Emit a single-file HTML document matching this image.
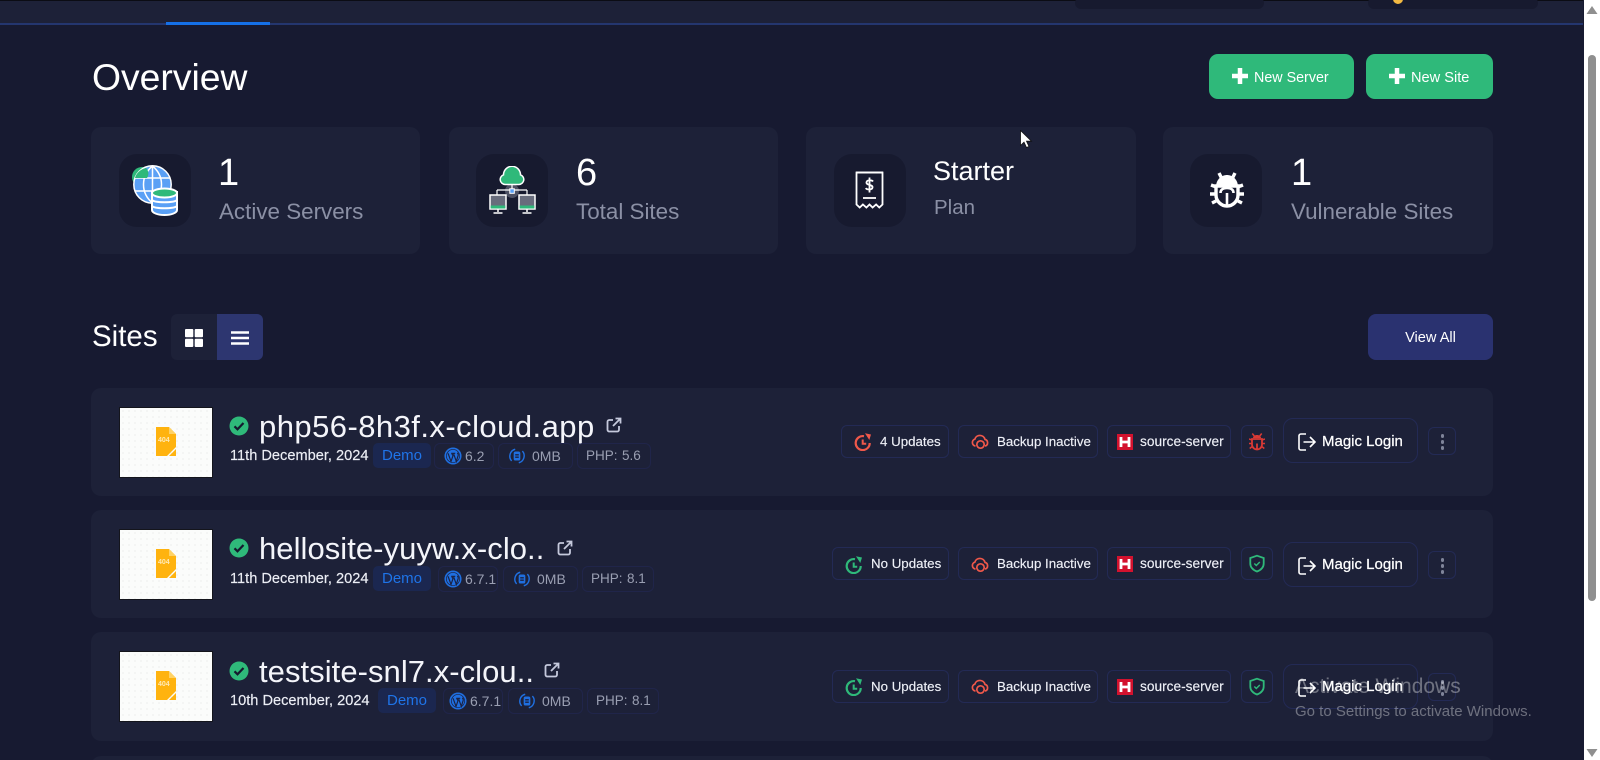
<!DOCTYPE html>
<html><head><meta charset="utf-8"><title>Overview</title>
<style>
*{box-sizing:border-box;margin:0;padding:0}
html,body{width:1600px;height:760px;overflow:hidden;background:#171a31}
body{position:relative;font-family:"Liberation Sans",sans-serif;color:#fff}
.a{position:absolute;white-space:nowrap}
.card{position:absolute;background:#1d2138;border-radius:10px}
.ib{position:absolute;top:154px;width:72px;height:73px;background:#171a2f;border-radius:18px}
.big{position:absolute;top:151px;font-size:38px;line-height:44px;color:#fff}
.lab{position:absolute;top:199px;font-size:22.4px;line-height:26px;color:#8b90a5}
.btn{position:absolute;top:54px;height:45px;background:#2fb97a;border-radius:9px}
.btn span{position:absolute;top:2px;line-height:45px;font-size:14.3px;color:#fff}
.plus{position:absolute;top:68px;width:16px;height:16px}
.name{position:absolute;font-size:31px;line-height:36px;color:#f4f5fa;white-space:nowrap;left:259px}
.date{position:absolute;left:230px;font-size:14.6px;line-height:20px;color:#eceef5;white-space:nowrap;-webkit-text-stroke:.15px #eceef5}
.chip{position:absolute;border:1px solid #232a55;border-radius:6px;white-space:nowrap}
.sm{height:26px;border-color:#20254a;font-size:14px;line-height:24px;color:#9a9fb2}
.sm span{position:absolute;top:0}
.sm span.php{font-size:13.5px;word-spacing:-1.5px}
.demo{position:absolute;height:25px;background:#1b2750;border-radius:5px;color:#1f74e8;font-size:15px;line-height:25px;text-align:center;width:58px}
.st{height:33px;font-size:13.3px;line-height:31px;color:#eef0f7;-webkit-text-stroke:.15px #eef0f7}
.st span{position:absolute;top:0}
.st svg,.sm svg{position:absolute}
.ml{left:1283px;width:135px;height:45px;border-radius:10px;font-size:15px;line-height:44px;color:#fff;-webkit-text-stroke:.25px #fff}
.ml span{position:absolute;left:38px;top:0}
.ml svg{position:absolute;left:14px;top:14px}
.dots{left:1428px;width:28px;height:28px}
.dots i{position:absolute;left:11.5px;width:3.500px;height:3.500px;border-radius:50%;background:#7f8499}
.thumb{position:absolute;left:119px;width:94px;height:71px;background:#fbfcfb radial-gradient(#dfe3df .5px,transparent .8px) 0 0/6px 6px;border:1px solid #14151c}
.thumb svg{position:absolute;left:36px;top:19px}
.thumb span{position:absolute;left:38px;top:28px;font-size:7px;line-height:9px;font-weight:700;color:#ffe9b5}
.hchip{position:absolute;top:-3px;height:12px;background:#171a2f;border-radius:6px}
</style></head>
<body>
<svg width="0" height="0" style="position:absolute">
<defs>
<symbol id="check" viewBox="0 0 20 20"><circle cx="10" cy="10" r="9.500" fill="#2fb97a"/><path d="M5.500 10.300l3 3 6-6.300" fill="none" stroke="#15192e" stroke-width="2.200"/></symbol>
<symbol id="ext" viewBox="0 0 16 16"><path d="M7 3H3.200A1.700 1.700 0 0 0 1.500 4.700v8.100a1.700 1.700 0 0 0 1.700 1.700h8.100a1.700 1.700 0 0 0 1.700-1.700V9" fill="none" stroke="#c5c9dc" stroke-width="1.800"/><path d="M7 9l7-7M9.500 1.500H14.500V6.500" fill="none" stroke="#c5c9dc" stroke-width="1.800"/></symbol>
<symbol id="wp" viewBox="0 0 20 20"><circle cx="10" cy="10" r="9.500" fill="#1f6fe0"/><circle cx="10" cy="10" r="7.300" fill="none" stroke="#1b2140" stroke-width=".8"/><path d="M4.500 7l3.300 9 2.200-6.300L8.500 7M8 7h4.500M10.500 7l3.200 9 2-6.500c.4-1.500-.2-2.500-1-3" fill="none" stroke="#1b2140" stroke-width="1.300"/></symbol>
<symbol id="db" viewBox="0 0 20 20"><path d="M4 15.500A8 8 0 0 1 8 2.500M16 4.500A8 8 0 0 1 12 17.500" fill="none" stroke="#1f6fe0" stroke-width="1.600"/><rect x="6.300" y="5" width="7.400" height="10" rx="2" fill="#1f6fe0"/><path d="M8 8.300h4M8 10h4M8 11.700h4" stroke="#1b2140" stroke-width="1"/></symbol>
<symbol id="upd" viewBox="0 0 18 18"><path d="M10 3.200A7 7 0 1 0 15.700 10" fill="none" stroke="currentColor" stroke-width="2.200"/><path d="M8.700 6.500v4.300h3.500" fill="none" stroke="currentColor" stroke-width="2"/><path d="M11 .3L17 1.500 15.300 7z" fill="currentColor"/></symbol>
<symbol id="bk" viewBox="0 0 18 18"><path d="M4.500 13A3.500 3.500 0 0 1 3.800 6.200 5.300 5.300 0 0 1 14 6.400 3.400 3.400 0 0 1 14 13" fill="none" stroke="#f0584a" stroke-width="1.700"/><circle cx="9.500" cy="11.500" r="3.700" fill="none" stroke="#f0584a" stroke-width="1.700"/></symbol>
<symbol id="hz" viewBox="0 0 16 16"><rect width="16" height="16" fill="#d3122e"/><path d="M4 3v10M12 3v10M4 8h8" stroke="#fff" stroke-width="2.800"/></symbol>
<symbol id="bug" viewBox="0 0 16 18"><path d="M3.300 1l2 2.500M12.700 1l-2 2.500M0 6.500l3 1M16 6.500l-3 1M0 11h3M16 11h-3M.7 16l2.500-2M15.300 16l-2.500-2" stroke="currentColor" stroke-width="1.500"/><path d="M4 5.500C4 3.500 6 2.500 8 2.500S12 3.500 12 5.500z" fill="currentColor"/><path d="M3 6.500h10v5.500a5 5 0 0 1-10 0zM8 11v6" fill="none" stroke="currentColor" stroke-width="1.800"/></symbol>
<symbol id="sh" viewBox="0 0 16 18"><path d="M8 1.200L14.700 3.500V9c0 3.800-2.800 6.500-6.700 8C4.100 15.500 1.300 12.800 1.300 9V3.500z" fill="none" stroke="#2fb97a" stroke-width="1.800"/><path d="M5.300 9l2 2 3.500-3.500" fill="none" stroke="#2fb97a" stroke-width="1.500"/></symbol>
<symbol id="login" viewBox="0 0 18 18"><path d="M8 1H2.800A1.800 1.800 0 0 0 1 2.800v12.400A1.800 1.800 0 0 0 2.800 17H8" fill="none" stroke="#fff" stroke-width="1.600"/><path d="M5.500 9H17M12 4l5 5-5 5" fill="none" stroke="#fff" stroke-width="1.600"/></symbol>
<symbol id="p404" viewBox="0 0 20 29"><path d="M0 0h13l7 7v13l-9 9H0z" fill="#ffb30f"/><path d="M13 0l7 7h-7z" fill="#ffd265"/><path d="M20 22v7h-7z" fill="#ffb30f"/></symbol>
</defs>
</svg>

<!-- top bar -->
<div class="a" style="left:0;top:0;width:1583px;height:1px;background:#0b0c14"></div>
<div class="a" style="left:0;top:1px;width:1583px;height:22px;background:#1d2138"></div>
<div class="a" style="left:0;top:23px;width:1583px;height:2px;background:#24366f"></div>
<div class="a" style="left:166px;top:22px;width:104px;height:3px;background:#1570e8"></div>
<div class="hchip" style="left:1075px;width:189px"></div>
<div class="hchip" style="left:1368px;width:170px"></div>
<div class="a" style="left:1393px;top:-6px;width:10px;height:10px;border-radius:50%;background:#f3b942"></div>

<!-- overview -->
<div class="a" style="left:92px;top:55px;font-size:37.300px;line-height:44px;color:#fff">Overview</div>
<div class="btn" style="left:1209px;width:145px"><span style="left:45px">New Server</span></div>
<svg class="plus" style="left:1232px" viewBox="0 0 16 16"><path d="M8 0v16M0 8h16" stroke="#fff" stroke-width="4.500"/></svg>
<div class="btn" style="left:1366px;width:127px"><span style="left:45px;font-size:14.600px">New Site</span></div>
<svg class="plus" style="left:1389px" viewBox="0 0 16 16"><path d="M8 0v16M0 8h16" stroke="#fff" stroke-width="4.500"/></svg>

<div class="card" style="left:91px;top:127px;width:329px;height:127px"></div>
<div class="card" style="left:449px;top:127px;width:329px;height:127px"></div>
<div class="card" style="left:806px;top:127px;width:330px;height:127px"></div>
<div class="card" style="left:1163px;top:127px;width:330px;height:127px"></div>

<div class="ib" style="left:119px"></div>
<svg class="a" style="left:131px;top:165px" width="48" height="51" viewBox="0 0 48 51">
<circle cx="11" cy="12" r="10" fill="#2fb97a"/>
<circle cx="21.500" cy="19.500" r="18.700" fill="#5aa0f5" stroke="#fff" stroke-width="1.500"/>
<path d="M21.500 1v37M4 13h35M4 26h35M21.500 1c-12 10-12 27 0 37M21.500 1c12 10 12 27 0 37" fill="none" stroke="#fff" stroke-width="1.500"/>
<path d="M4 13c1-5 6-9 11-10 3 3 3 7 1 10z" fill="#2fb97a"/>
<path d="M21 27h25v18c0 3-6 5-12.500 5S21 48 21 45z" fill="#5aa0f5" stroke="#fff" stroke-width="2"/>
<ellipse cx="33.500" cy="28" rx="12.500" ry="4.500" fill="#2fb97a" stroke="#fff" stroke-width="2"/>
<path d="M21 35c3 3 22 3 25 0M21 41c3 3 22 3 25 0" fill="none" stroke="#fff" stroke-width="2"/>
</svg>
<div class="big" style="left:218px">1</div>
<div class="lab" style="left:219px">Active Servers</div>

<div class="ib" style="left:476px"></div>
<svg class="a" style="left:489px;top:166px" width="47" height="50" viewBox="0 0 47 50">
<circle cx="23" cy="25" r="7" fill="#4c5063"/>
<path d="M8 24h30M8 24v5M38 24v5M23 18v7" fill="none" stroke="#fff" stroke-width="1.200"/>
<path d="M16 18.500a5 5 0 0 1-1.500-9.700 8.500 8.500 0 0 1 17 0 5 5 0 0 1-1.500 9.700z" fill="#2fb97a" stroke="#fff" stroke-width="1.500"/>
<rect x="20.800" y="22.800" width="4.500" height="4.500" fill="#5aa0f5" stroke="#fff" stroke-width="1"/>
<rect x="1" y="29" width="16" height="14" fill="#686c7c" stroke="#fff" stroke-width="1.500"/><rect x="1.700" y="39.500" width="14.600" height="3" fill="#2fb97a"/><path d="M9 43v3M4.500 47h9" stroke="#fff" stroke-width="1.500"/>
<rect x="30" y="29" width="16" height="14" fill="#686c7c" stroke="#fff" stroke-width="1.500"/><rect x="30.700" y="39.500" width="14.600" height="3" fill="#2fb97a"/><path d="M38 43v3M33.500 47h9" stroke="#fff" stroke-width="1.500"/>
</svg>
<div class="big" style="left:576px">6</div>
<div class="lab" style="left:576px">Total Sites</div>

<div class="ib" style="left:834px"></div>
<svg class="a" style="left:855px;top:171px" width="29" height="38" viewBox="0 0 29 38">
<path d="M1.500 1.500h26v32l-3.200 3-3.200-3-3.500 3-3.100-3-3.100 3-3.500-3-3.200 3-3.200-3z" fill="none" stroke="#fff" stroke-width="1.800"/>
<path d="M1 1.500h27" stroke="#fff" stroke-width="2"/>
<path d="M18 10.500c-1-1.500-6-2-6.500 .8-.5 3.200 6.500 2 6 5.200-.4 2.700-5.500 2.400-6.800 .6M14.500 6.500v15" fill="none" stroke="#fff" stroke-width="1.800"/>
<path d="M8 27h13" stroke="#fff" stroke-width="1.800"/>
</svg>
<div class="big" style="left:933px;font-size:27px;top:149px">Starter</div>
<div class="lab" style="left:934px;font-size:20.500px;top:195px">Plan</div>

<div class="ib" style="left:1190px"></div>
<svg class="a" style="left:1210px;top:172px" width="34" height="36" viewBox="0 0 34 36">
<path d="M9 1l2.500 5M25 1l-2.500 5M1 13l4 1.500M33 13l-4 1.500M0 22h5M34 22h-5M2 31l4-2M32 31l-4-2" stroke="#fff" stroke-width="3.400"/>
<path d="M6 15C6 7 12 3 17 3s11 4 11 12z" fill="#fff"/>
<path d="M6 14h22v9c0 6-5 11-11 11S6 29 6 23z" fill="none" stroke="#fff" stroke-width="3.400"/>
<path d="M10.500 21c0-3 2-5 6.500-5s6.500 2 6.500 5M17 21v12" fill="none" stroke="#fff" stroke-width="2.600"/>
</svg>
<div class="big" style="left:1291px">1</div>
<div class="lab" style="left:1291px">Vulnerable Sites</div>

<div class="a" style="left:1020px;top:130px"><svg width="13" height="18" viewBox="0 0 13 18"><path d="M.5 .5v15l3.500-3.300 2.500 5.300 2.500-1-2.500-5.300h5z" fill="#fff" stroke="#111" stroke-width=".8"/></svg></div>

<!-- sites -->
<div class="a" style="left:92px;top:320px;font-size:29.500px;line-height:34px;color:#fff">Sites</div>
<div class="a" style="left:171px;top:314px;width:92px;height:46px;background:#1d2138;border-radius:6px"></div>
<div class="a" style="left:217px;top:314px;width:46px;height:46px;background:#2d3670;border-radius:0 6px 6px 0"></div>
<svg class="a" style="left:185px;top:329px" width="18" height="18" viewBox="0 0 18 18"><rect x="0" y="0" width="8.300" height="8.300" rx="1" fill="#fff"/><rect x="9.700" y="0" width="8.300" height="8.300" rx="1" fill="#fff"/><rect x="0" y="9.700" width="8.300" height="8.300" rx="1" fill="#fff"/><rect x="9.700" y="9.700" width="8.300" height="8.300" rx="1" fill="#fff"/></svg>
<svg class="a" style="left:231px;top:331px" width="18" height="14" viewBox="0 0 18 14"><path d="M0 1.500h18M0 7h18M0 12.500h18" stroke="#fff" stroke-width="2.600"/></svg>
<div class="a" style="left:1368px;top:315px;width:125px;height:45px;background:#2a3270;border-radius:8px;text-align:center;line-height:47px;font-size:14.600px;color:#fff;box-shadow:0 -1px 0 #2a3270">View All</div>

<!-- row 1 -->
<div class="card" style="left:91px;top:388px;width:1402px;height:108px"></div>
<div class="thumb" style="top:407px"><svg width="20" height="29"><use href="#p404"/></svg><span>404</span></div>
<svg class="a" style="left:229px;top:416px" width="20" height="20"><use href="#check"/></svg>
<div class="name" style="top:409px;letter-spacing:.45px">php56-8h3f.x-cloud.app</div>
<svg class="a" style="left:606px;top:417px" width="16" height="16"><use href="#ext"/></svg>
<div class="date" style="top:446px">11th December, 2024</div>
<div class="demo" style="left:373px;top:443px">Demo</div>
<div class="chip sm" style="left:434px;top:443px;width:60px"><svg style="left:9px;top:3px" width="18" height="18"><use href="#wp"/></svg><span style="left:30px">6.2</span></div>
<div class="chip sm" style="left:498px;top:443px;width:75px"><svg style="left:9px;top:3px" width="18" height="18"><use href="#db"/></svg><span style="left:33px">0MB</span></div>
<div class="chip sm" style="left:577px;top:443px;width:74px"><span class="php" style="left:8px">PHP:&nbsp; 5.6</span></div>

<div class="chip st" style="left:841px;top:425px;width:108px"><svg style="left:12px;top:7px;color:#f0584a" width="18" height="18"><use href="#upd"/></svg><span style="left:38px">4 Updates</span></div>
<div class="chip st" style="left:958px;top:425px;width:140px"><svg style="left:12px;top:7px" width="18" height="18"><use href="#bk"/></svg><span style="left:38px">Backup Inactive</span></div>
<div class="chip st" style="left:1107px;top:425px;width:124px"><svg style="left:9px;top:8px" width="16" height="16"><use href="#hz"/></svg><span style="left:32px;font-size:13.700px">source-server</span></div>
<div class="chip st" style="left:1241px;top:425px;width:32px"><svg style="left:7px;top:6px;color:#d93a35" width="16" height="19"><use href="#bug"/></svg></div>
<div class="chip ml" style="top:418px"><svg width="18" height="18"><use href="#login"/></svg><span style="top:1px">Magic Login</span></div>
<div class="chip dots" style="top:427px"><i style="top:6px"></i><i style="top:12px"></i><i style="top:18px"></i></div>

<!-- row 2 -->
<div class="card" style="left:91px;top:510px;width:1402px;height:108px"></div>
<div class="thumb" style="top:529px"><svg width="20" height="29"><use href="#p404"/></svg><span>404</span></div>
<svg class="a" style="left:229px;top:538px" width="20" height="20"><use href="#check"/></svg>
<div class="name" style="top:531px;letter-spacing:.05px">hellosite-yuyw.x-clo..</div>
<svg class="a" style="left:557px;top:540px" width="16" height="16"><use href="#ext"/></svg>
<div class="date" style="top:569px">11th December, 2024</div>
<div class="demo" style="left:373px;top:566px">Demo</div>
<div class="chip sm" style="left:438px;top:566px;width:60px"><svg style="left:5px;top:3px" width="18" height="18"><use href="#wp"/></svg><span style="left:26px">6.7.1</span></div>
<div class="chip sm" style="left:503px;top:566px;width:75px"><svg style="left:9px;top:3px" width="18" height="18"><use href="#db"/></svg><span style="left:33px">0MB</span></div>
<div class="chip sm" style="left:582px;top:566px;width:72px"><span class="php" style="left:8px">PHP:&nbsp; 8.1</span></div>

<div class="chip st" style="left:832px;top:547px;width:117px"><svg style="left:12px;top:8px;color:#2fb97a" width="18" height="18"><use href="#upd"/></svg><span style="left:38px">No Updates</span></div>
<div class="chip st" style="left:958px;top:547px;width:140px"><svg style="left:12px;top:8px" width="18" height="18"><use href="#bk"/></svg><span style="left:38px">Backup Inactive</span></div>
<div class="chip st" style="left:1107px;top:547px;width:124px"><svg style="left:9px;top:8px" width="16" height="16"><use href="#hz"/></svg><span style="left:32px;font-size:13.700px">source-server</span></div>
<div class="chip st" style="left:1241px;top:547px;width:32px"><svg style="left:7px;top:6px" width="16" height="19"><use href="#sh"/></svg></div>
<div class="chip ml" style="top:542px"><svg width="18" height="18"><use href="#login"/></svg><span>Magic Login</span></div>
<div class="chip dots" style="top:551px"><i style="top:6px"></i><i style="top:12px"></i><i style="top:18px"></i></div>

<!-- row 3 -->
<div class="card" style="left:91px;top:632px;width:1402px;height:109px"></div>
<div class="thumb" style="top:651px"><svg width="20" height="29"><use href="#p404"/></svg><span>404</span></div>
<svg class="a" style="left:229px;top:661px" width="20" height="20"><use href="#check"/></svg>
<div class="name" style="top:654px;letter-spacing:.05px">testsite-snl7.x-clou..</div>
<svg class="a" style="left:544px;top:662px" width="16" height="16"><use href="#ext"/></svg>
<div class="date" style="top:691px">10th December, 2024</div>
<div class="demo" style="left:378px;top:688px">Demo</div>
<div class="chip sm" style="left:443px;top:688px;width:60px"><svg style="left:5px;top:3px" width="18" height="18"><use href="#wp"/></svg><span style="left:26px">6.7.1</span></div>
<div class="chip sm" style="left:508px;top:688px;width:75px"><svg style="left:9px;top:3px" width="18" height="18"><use href="#db"/></svg><span style="left:33px">0MB</span></div>
<div class="chip sm" style="left:587px;top:688px;width:72px"><span class="php" style="left:8px">PHP:&nbsp; 8.1</span></div>

<div class="chip st" style="left:832px;top:670px;width:117px"><svg style="left:12px;top:7px;color:#2fb97a" width="18" height="18"><use href="#upd"/></svg><span style="left:38px">No Updates</span></div>
<div class="chip st" style="left:958px;top:670px;width:140px"><svg style="left:12px;top:7px" width="18" height="18"><use href="#bk"/></svg><span style="left:38px">Backup Inactive</span></div>
<div class="chip st" style="left:1107px;top:670px;width:124px"><svg style="left:9px;top:8px" width="16" height="16"><use href="#hz"/></svg><span style="left:32px;font-size:13.700px">source-server</span></div>
<div class="chip st" style="left:1241px;top:670px;width:32px"><svg style="left:7px;top:6px" width="16" height="19"><use href="#sh"/></svg></div>
<div class="chip ml" style="top:664px"><svg width="18" height="18"><use href="#login"/></svg><span>Magic Login</span></div>
<div class="chip dots" style="top:673px"><i style="top:6px"></i><i style="top:12px"></i><i style="top:18px"></i></div>

<!-- row 4 -->
<div class="card" style="left:91px;top:756px;width:1402px;height:20px"></div>

<!-- activate windows -->
<div class="a" style="left:1295px;top:674px;font-size:21px;line-height:26px;color:rgba(255,255,255,.36)">Activate Windows</div>
<div class="a" style="left:1295px;top:703px;font-size:15px;line-height:18px;color:rgba(255,255,255,.36)">Go to Settings to activate Windows.</div>

<!-- scrollbar -->
<div class="a" style="left:1584px;top:0;width:16px;height:760px;background:#fff"></div>
<div class="a" style="left:1588px;top:55px;width:8px;height:546px;background:#8f8f8f;border-radius:4px"></div>
<svg class="a" style="left:1586px;top:6px" width="12" height="9"><path d="M6 0l5.500 8H.5z" fill="#8f8f8f"/></svg>
<svg class="a" style="left:1586px;top:749px" width="12" height="9"><path d="M6 8L11.500 0H.5z" fill="#8f8f8f"/></svg>
</body></html>
